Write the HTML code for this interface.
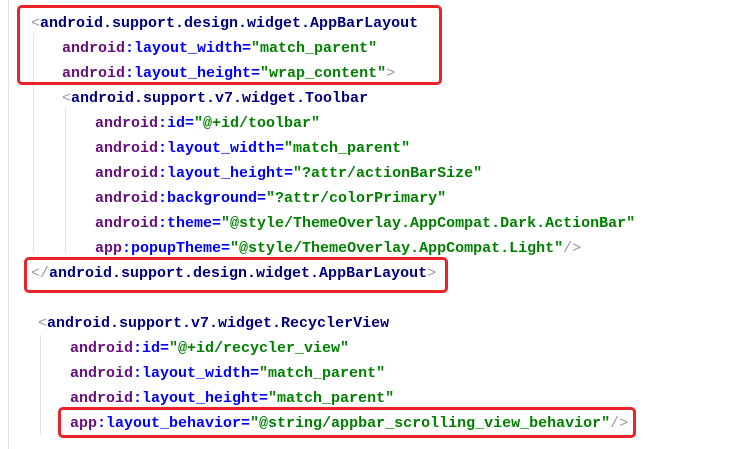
<!DOCTYPE html>
<html><head><meta charset="utf-8"><style>
html,body{margin:0;padding:0;background:#fff;}
body{width:744px;height:449px;position:relative;overflow:hidden;}
.l{position:absolute;white-space:pre;font-family:"Liberation Mono",monospace;font-weight:bold;font-size:15px;line-height:25px;height:25px;margin-top:3px}
.t{color:#000080}.n{color:#660e7a}.a{color:#0000ff}.v{color:#008000}.b{color:#999;font-weight:normal}
.g{position:absolute;width:1px;background:#e4e4e4}
.box{position:absolute;border:3px solid #e8232a;border-radius:5px;box-sizing:border-box}
</style></head><body>
<div class="g" style="left:8px;top:0;height:449px"></div>
<div class="g" style="left:33px;top:33px;height:220px"></div>
<div class="g" style="left:65px;top:108px;height:145px"></div>
<div class="g" style="left:40px;top:335px;height:100px"></div>

<div class="l" style="left:31px;top:8px"><span class="b">&lt;</span><span class="t">android.support.design.widget.AppBarLayout</span></div>
<div class="l" style="left:62px;top:33px"><span class="n">android</span><span class="a">:layout_width=</span><span class="v">″match_parent″</span></div>
<div class="l" style="left:62px;top:58px"><span class="n">android</span><span class="a">:layout_height=</span><span class="v">″wrap_content″</span><span class="b">&gt;</span></div>
<div class="l" style="left:62px;top:83px"><span class="b">&lt;</span><span class="t">android.support.v7.widget.Toolbar</span></div>
<div class="l" style="left:95px;top:108px"><span class="n">android</span><span class="a">:id=</span><span class="v">″@+id/toolbar″</span></div>
<div class="l" style="left:95px;top:133px"><span class="n">android</span><span class="a">:layout_width=</span><span class="v">″match_parent″</span></div>
<div class="l" style="left:95px;top:158px"><span class="n">android</span><span class="a">:layout_height=</span><span class="v">″?attr/actionBarSize″</span></div>
<div class="l" style="left:95px;top:183px"><span class="n">android</span><span class="a">:background=</span><span class="v">″?attr/colorPrimary″</span></div>
<div class="l" style="left:95px;top:208px"><span class="n">android</span><span class="a">:theme=</span><span class="v">″@style/ThemeOverlay.AppCompat.Dark.ActionBar″</span></div>
<div class="l" style="left:95px;top:233px"><span class="n">app</span><span class="a">:popupTheme=</span><span class="v">″@style/ThemeOverlay.AppCompat.Light″</span><span class="b">/&gt;</span></div>
<div class="l" style="left:31px;top:258px"><span class="b">&lt;/</span><span class="t">android.support.design.widget.AppBarLayout</span><span class="b">&gt;</span></div>

<div class="l" style="left:38px;top:308px"><span class="b">&lt;</span><span class="t">android.support.v7.widget.RecyclerView</span></div>
<div class="l" style="left:70px;top:333px"><span class="n">android</span><span class="a">:id=</span><span class="v">″@+id/recycler_view″</span></div>
<div class="l" style="left:70px;top:358px"><span class="n">android</span><span class="a">:layout_width=</span><span class="v">″match_parent″</span></div>
<div class="l" style="left:70px;top:383px"><span class="n">android</span><span class="a">:layout_height=</span><span class="v">″match_parent″</span></div>
<div class="l" style="left:70px;top:408px"><span class="n">app</span><span class="a">:layout_behavior=</span><span class="v">″@string/appbar_scrolling_view_behavior″</span><span class="b">/&gt;</span></div>

<div class="box" style="left:17px;top:5px;width:425px;height:80px"></div>
<div class="box" style="left:24px;top:257px;width:424px;height:36px"></div>
<div class="box" style="left:58px;top:407px;width:578px;height:31px"></div>
</body></html>
